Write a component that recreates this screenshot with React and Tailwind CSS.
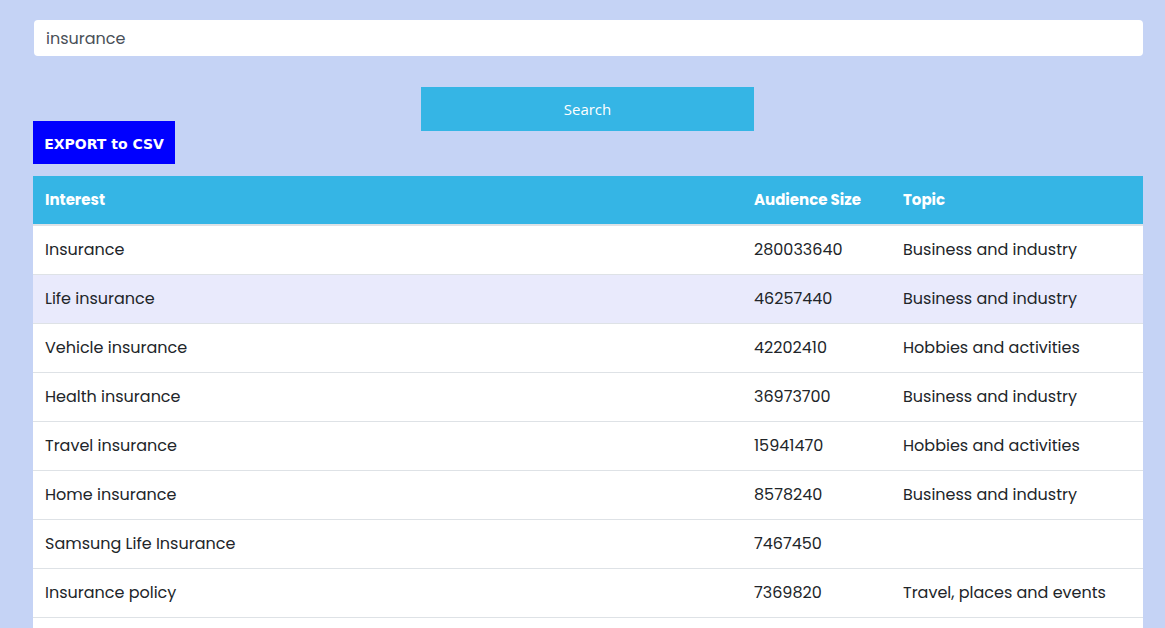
import React, { useState } from 'react';

const rows = [
  { name: 'Insurance', size: '280033640', topic: 'Business and industry' },
  { name: 'Life insurance', size: '46257440', topic: 'Business and industry' },
  { name: 'Vehicle insurance', size: '42202410', topic: 'Hobbies and activities' },
  { name: 'Health insurance', size: '36973700', topic: 'Business and industry' },
  { name: 'Travel insurance', size: '15941470', topic: 'Hobbies and activities' },
  { name: 'Home insurance', size: '8578240', topic: 'Business and industry' },
  { name: 'Samsung Life Insurance', size: '7467450', topic: '' },
  { name: 'Insurance policy', size: '7369820', topic: 'Travel, places and events' },
];

const font = { fontFamily: "Poppins, 'Open Sans', sans-serif" };

export default function App() {
  const [query, setQuery] = useState('insurance');

  return (
    <div className="min-h-screen bg-[#c5d3f5] px-[33px] pt-5" style={font}>
      <input
        value={query}
        onChange={(e) => setQuery(e.target.value)}
        className="block w-[1109px] h-9 ml-px rounded bg-white px-3 text-[16px] text-[#495057] outline-none"
      />

      <div className="flex justify-center mt-[31px] pl-[10px]">
        <button
          className="w-[333px] h-11 bg-[#35b5e5] text-white text-[15px]"
          style={{ fontFamily: "'Open Sans', sans-serif" }}
        >
          Search
        </button>
      </div>

      {/* Export */}
      <button
        className="block -mt-[10px] w-[142px] h-[43px] pt-[3px] bg-[#0000ff] text-white text-[14px] font-bold"
        style={{ fontFamily: "'DejaVu Sans', sans-serif" }}
      >
        EXPORT to CSV
      </button>

      <table className="mt-3 w-[1110px] table-fixed border-collapse text-[16px] text-[#212529]">
        <thead className="bg-[#35b5e5] text-white">
          <tr className="h-[49px] border-b-2 border-[#dee2e6]">
            <th className="w-[709px] px-3 pt-px text-left text-[15px] font-bold">Interest</th>
            <th className="w-[149px] px-3 pt-px text-left text-[15px] font-bold">Audience Size</th>
            <th className="px-3 pt-px text-left text-[15px] font-bold">Topic</th>
          </tr>
        </thead>
        <tbody>
          {rows.map((r, i) => (
            <tr key={i} className={`h-[49px] border-b border-[#dee2e6] ${i === 1 ? 'bg-[#e9eafc]' : 'bg-white'}`}>
              <td className="px-3">{r.name}</td>
              <td className="px-3">{r.size}</td>
              <td className="px-3">{r.topic}</td>
            </tr>
          ))}
          <tr className="h-[49px] bg-white">
            <td colSpan={3} />
          </tr>
        </tbody>
      </table>
    </div>
  );
}
